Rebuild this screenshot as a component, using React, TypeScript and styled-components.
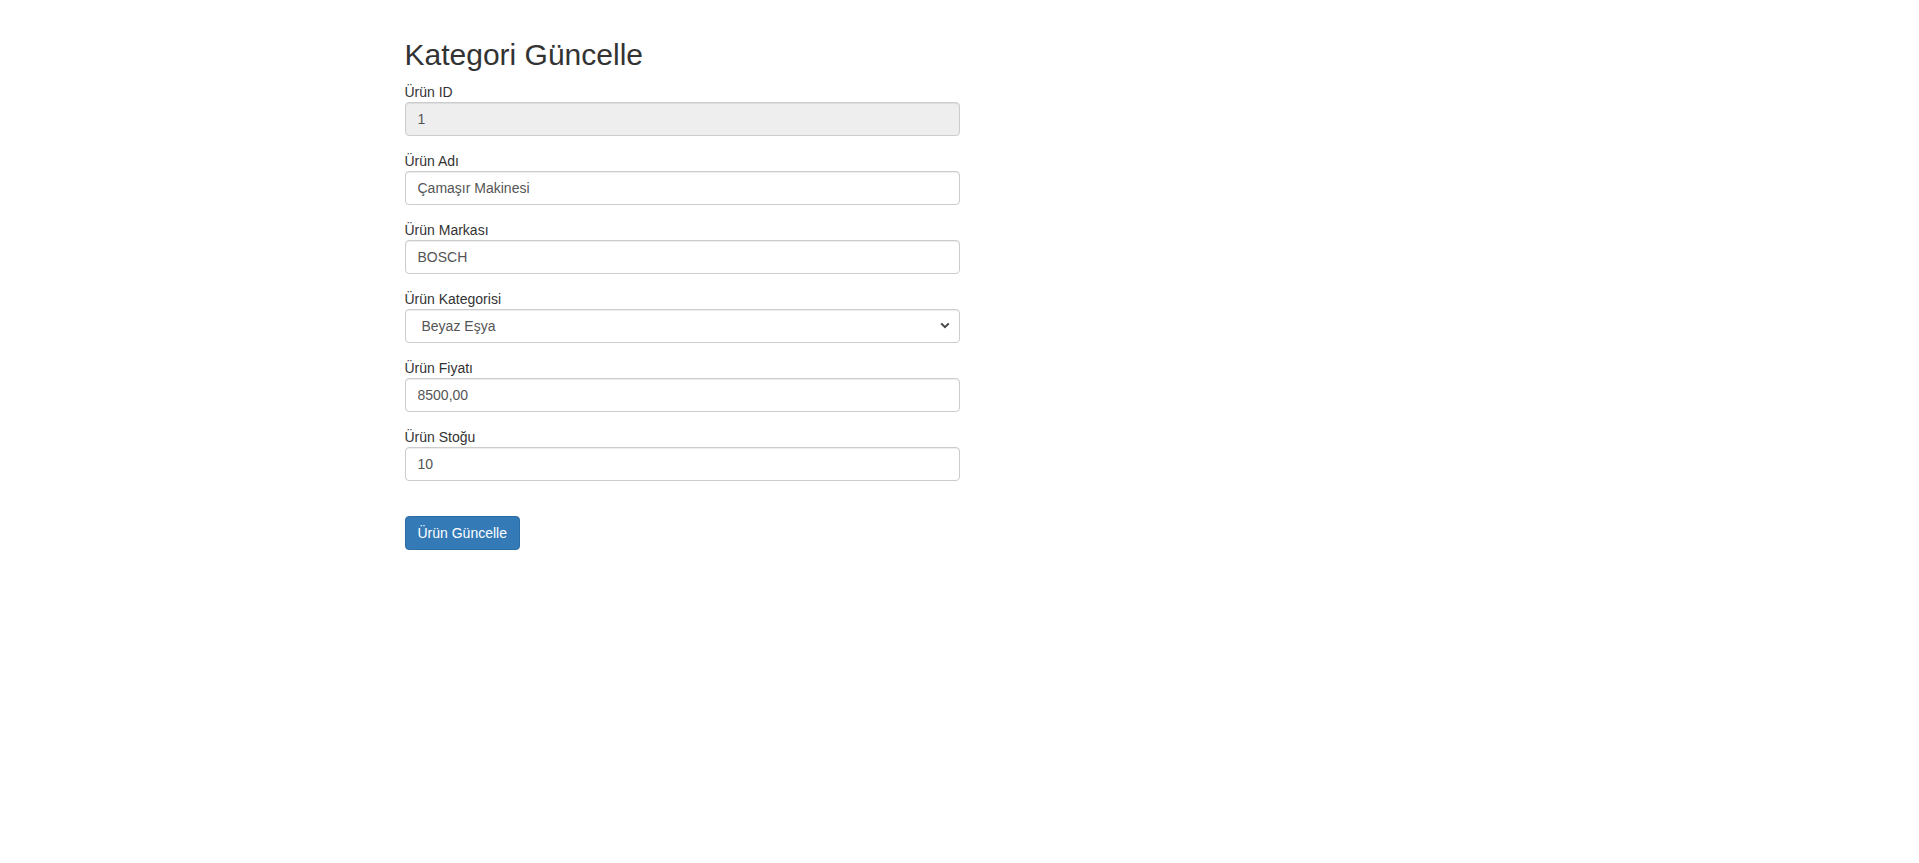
import styled, { createGlobalStyle } from 'styled-components';

const GlobalStyle = createGlobalStyle`
  * {
    box-sizing: border-box;
  }
  body {
    margin: 0;
    background: #fff;
    color: #333;
    font-family: "Liberation Sans", Arial, Helvetica, sans-serif;
    font-size: 14px;
    line-height: 1.42857143;
  }
`;

const fields = [
  { id: 'id', label: 'Ürün ID', value: '1', disabled: true },
  { id: 'name', label: 'Ürün Adı', value: 'Çamaşır Makinesi' },
  { id: 'brand', label: 'Ürün Markası', value: 'BOSCH' },
  { id: 'category', label: 'Ürün Kategorisi', value: 'Beyaz Eşya', select: true },
  { id: 'price', label: 'Ürün Fiyatı', value: '8500,00' },
  { id: 'stock', label: 'Ürün Stoğu', value: '10' },
];

function ChevronDown() {
  return (
    <svg width='10' height='7' viewBox='0 0 10 7' aria-hidden='true'>
      <path d='M1.2 1.4 L5 5.2 L8.8 1.4' fill='none' stroke='#444' strokeWidth='2' />
    </svg>
  );
}

function App() {
  return (
    <>
      <GlobalStyle />
      <Container>
        <Column>
          <Heading>Kategori Güncelle</Heading>
          <form onSubmit={(e) => e.preventDefault()}>
            {fields.map((f) => (
              <FormGroup key={f.id}>
                <Label htmlFor={f.id}>{f.label}</Label>
                {f.select ? (
                  <SelectWrap>
                    <Select id={f.id} defaultValue={f.value}>
                      <option>Beyaz Eşya</option>
                      <option>Elektronik</option>
                      <option>Mobilya</option>
                    </Select>
                    <Arrow>
                      <ChevronDown />
                    </Arrow>
                  </SelectWrap>
                ) : (
                  <Input id={f.id} defaultValue={f.value} disabled={f.disabled} />
                )}
              </FormGroup>
            ))}
            <Actions>
              <Button type='submit'>Ürün Güncelle</Button>
            </Actions>
          </form>
        </Column>
      </Container>
    </>
  );
}

// bootstrap-like container, column sits directly inside it
const Container = styled.div`
  width: 1170px;
  margin: 0 auto;
  padding: 18px 15px 0;
`;

const Column = styled.div`
  width: 585px;
  padding: 0 15px;
`;

const Heading = styled.h2`
  margin: 20px 0 11px;
  font-size: 30px;
  font-weight: 500;
  line-height: 1.1;
  color: #333;
`;

const FormGroup = styled.div`
  margin-bottom: 15px;
`;

const Label = styled.label`
  display: block;
  margin: 0;
  font-weight: normal;
  color: #333;
`;

const fieldBase = `
  display: block;
  width: 100%;
  height: 34px;
  padding: 6px 12px;
  font-family: "Liberation Sans", Arial, Helvetica, sans-serif;
  font-size: 14px;
  line-height: 1.42857143;
  color: #555;
  background-color: #fff;
  border: 1px solid #ccc;
  border-radius: 4px;
  box-shadow: inset 0 1px 1px rgba(0, 0, 0, 0.075);
  outline: none;
`;

const Input = styled.input`
  ${fieldBase}
  &:disabled {
    background-color: #eee;
    opacity: 1;
    cursor: not-allowed;
  }
`;

const SelectWrap = styled.div`
  position: relative;
`;

const Select = styled.select`
  ${fieldBase}
  appearance: none;
  padding-left: 16px;
`;

const Arrow = styled.span`
  position: absolute;
  right: 10px;
  top: 13px;
  display: flex;
  pointer-events: none;
`;

const Actions = styled.div`
  margin-top: 35px;
`;

const Button = styled.button`
  display: inline-block;
  height: 34px;
  padding: 6px 12px;
  font-family: "Liberation Sans", Arial, Helvetica, sans-serif;
  font-size: 14px;
  line-height: 1.42857143;
  color: #fff;
  background-color: #337ab7;
  border: 1px solid #2e6da4;
  border-radius: 4px;
  cursor: pointer;
`;

export default App;
